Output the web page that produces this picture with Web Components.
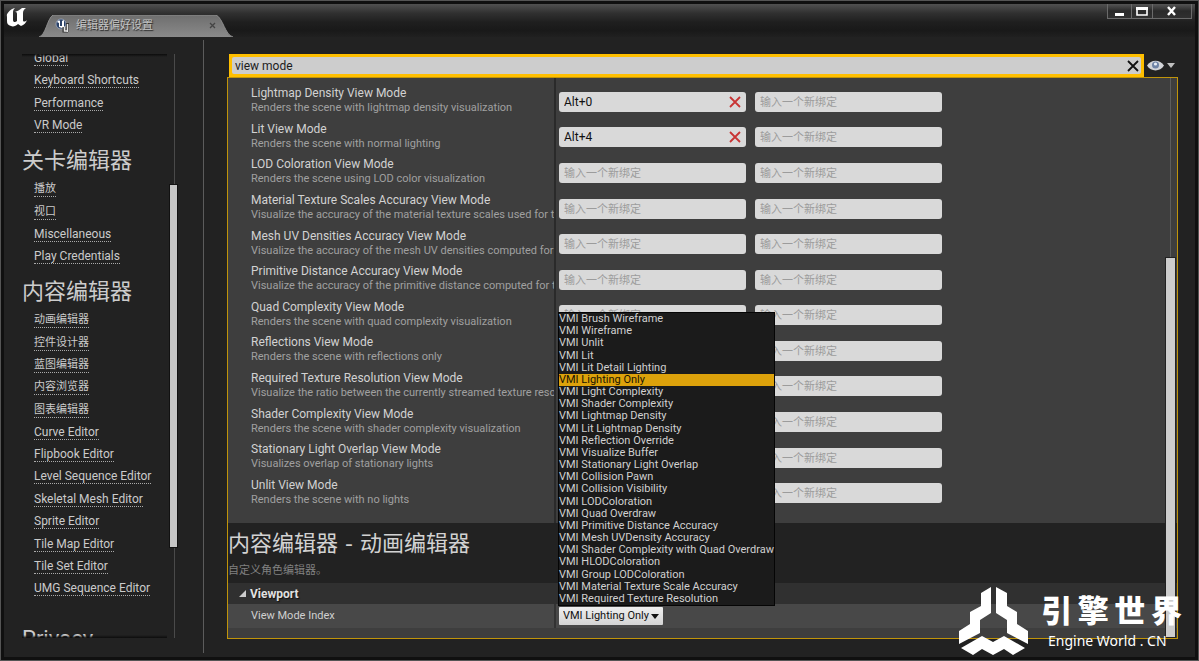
<!DOCTYPE html>
<html lang="zh-CN">
<head>
<meta charset="utf-8">
<title>编辑器偏好设置</title>
<style>
html, body { margin: 0; background: #222; }
body { font: 12px/16px Roboto, "Noto Sans CJK SC", sans-serif; color: #d0d0d0; }
</style>
</head>
<body>
<editor-window></editor-window>

<script>
const define = (name, html, setup) => {
  const t = document.createElement('template');
  t.innerHTML = html;
  customElements.define(name, class extends HTMLElement {
    constructor() {
      super();
      this.attachShadow({ mode: 'open' }).append(t.content.cloneNode(true));
    }
    connectedCallback() { if (setup) setup(this, this.shadowRoot); }
  });
};

define('title-bar', `
<style>
:host { display: flex; height: 33px; padding-left: 1px; box-sizing: border-box;
  background: linear-gradient(#505050, #303030 28%, #1f1f1f 55%, #191919 80%, #202020); }
.logo { width: 24px; height: 24px; margin: 1px 0 0; flex: none; }
.tab { position: relative; display: flex; align-items: center; width: 194px; height: 22px; margin: 11px 0 0 10px; }
.shape { position: absolute; inset: 0; width: 100%; height: 100%; }
.icon { position: relative; width: 16px; height: 16px; margin-left: 16px; }
.name { position: relative; flex: 1; margin-left: 5px; font-size: 11px; color: #c4c4c4; text-shadow: 1px 1px 1px #222; }
.tab button { position: relative; width: 8px; height: 8px; margin-right: 16px; padding: 0; border: 0; background: none; display: flex; }
.controls { display: flex; margin: 0 3px 0 auto; height: 15px; border: 1px solid #6a6a6a; border-top: 0; box-sizing: border-box; }
.controls button { display: grid; place-items: center; width: 24px; padding: 0; border: 0; border-right: 1px solid #6a6a6a; background: linear-gradient(#555, #2a2a2a 50%, #303030); }
.controls button:nth-child(2) { width: 21px; }
.controls button:last-child { width: 38px; border-right: 0; }
</style>
<svg class="logo" viewBox="0 0 24 24" fill="#fff" role="img" aria-label="Unreal"><path d="M1 12C2 8 5 4 10 3 8 5 8 6 8 8v7c0 2 2 3 4 1V9c0-2-1-2-2-2 2-1 5-2 7-4h4c-2 1-3 3-3 5v7c0 2 2 2 4 0-1 3-3 5-6 6l-3-2c-2 2-5 3-7 2-3-1-4-2-4-5V10C2 9 2 10 1 12z"/></svg>
<div class="tab">
  <svg class="shape" viewBox="0 0 194 22" preserveAspectRatio="none"><defs><linearGradient id="g" x2="0" y2="1"><stop stop-color="#6e6e6e"/><stop offset="1" stop-color="#8a8a8a"/></linearGradient></defs><path d="M0 22C7 20 8 4 14 0H177C184 3 186 20 194 22Z" fill="url(#g)"/><path d="M0 22C7 20 8 4 14 0H177C184 3 186 20 194 22" fill="none" stroke="#8c8c8c"/></svg>
  <svg class="icon" viewBox="0 0 16 16"><circle cx="6" cy="6" r="5" fill="#2b4268" stroke="#aab6cc" stroke-width=".7"/><path d="M2 4c2-2 2-2 3-1v5h2V3l2-1v6l1 1-3 1-3-1V5z" fill="#fff"/><path d="M9 9v4h4M12.500 5v9" fill="none" stroke="#333" stroke-width="3"/><path d="M9.500 9v4h3M12.500 6v8" fill="none" stroke="#e4e4e4" stroke-width="1.500"/></svg>
  <span class="name">编辑器偏好设置</span>
  <button aria-label="关闭标签"><svg viewBox="0 0 8 8" width="8" height="8"><path d="M1 1l5 5M6 1L1 6" stroke="#444" stroke-width="1.3"/></svg></button>
</div>
<div class="controls">
  <button aria-label="最小化"><svg width="12" height="11"><path d="M1 7h9v3H1z" fill="#fff"/></svg></button>
  <button aria-label="最大化"><svg width="12" height="10"><path d="M1 3h10v6H1z" fill="none" stroke="#fff" stroke-width="1.6"/><path d="M0 1h12v3H0z" fill="#fff"/></svg></button>
  <button aria-label="关闭"><svg width="12" height="10"><path d="M2 1l7 8M9 1L2 9" stroke="#fff" stroke-width="2.4"/></svg></button>
</div>`);

define('nav-group', `
<style>
:host { display: block; }
h2 { margin: 0; padding-top: 6px; font-size: 22px; line-height: 35px; font-weight: 400; color: #ccc; white-space: nowrap; }
h2:empty { display: none; }
ul { display: grid; grid-auto-rows: 1fr; align-items: center; margin: 0; padding: 0 0 0 12px; list-style: none; }
li { display: flex; }
a { color: #cbcbcb; text-decoration: none; line-height: 14px; border-bottom: 1px dotted #aaa; white-space: nowrap; }
a.cjk { font-size: 11px; padding-top: 1px; }
</style><h2></h2><ul></ul>`, (el, r) => {
  r.querySelector('h2').textContent = el.getAttribute('heading') || '';
  const ul = r.querySelector('ul');
  const items = (el.getAttribute('items') || '').split('|').filter(Boolean);
  ul.style.minHeight = Math.round(items.length * 22.4) + 'px';
  for (const i of items) {
    const li = document.createElement('li'), a = document.createElement('a');
    a.href = '#'; a.textContent = i;
    if (i.charCodeAt(0) > 255) a.className = 'cjk';
    li.append(a); ul.append(li);
  }
});

define('side-nav', `
<style>
:host { display: flex; width: 200px; flex: none; box-sizing: border-box; padding: 17px 0 19px; position: relative; }
.rule { position: absolute; right: 0; top: 3px; bottom: 4px; width: 1px; background: #5c5c5c; }
nav { position: relative; flex: 1; margin-left: 18px; overflow: hidden; height: 0; min-height: 100%; }
nav::before, nav::after { content: ""; position: absolute; left: 0; right: 0; height: 3px; z-index: 1; }
nav::before { top: 0; background: linear-gradient(#0c0c0c, transparent); }
nav::after { bottom: 0; background: linear-gradient(transparent, #0c0c0c); }
.list { margin-top: -7px; }
.last { margin-top: 15px; }
.bar { width: 7px; margin: 0 27px 0 3px; background: linear-gradient(90deg, transparent 4px, #4a4a4a 4px 5px, transparent 5px); display: grid; grid-template-rows: 131fr 362fr 91fr; }
.bar i { grid-row: 2; background: #c6c6c6; outline: 1px solid #111; }
</style>
<nav><div class="list">
<nav-group items="Global|Keyboard Shortcuts|Performance|VR Mode"></nav-group>
<nav-group heading="关卡编辑器" items="播放|视口|Miscellaneous|Play Credentials"></nav-group>
<nav-group heading="内容编辑器" items="动画编辑器|控件设计器|蓝图编辑器|内容浏览器|图表编辑器|Curve Editor|Flipbook Editor|Level Sequence Editor|Skeletal Mesh Editor|Sprite Editor|Tile Map Editor|Tile Set Editor|UMG Sequence Editor"></nav-group>
<nav-group class="last" heading="Privacy"></nav-group>
</div></nav>
<div class="bar"><i></i></div><div class="rule"></div>`);

define('search-bar', `
<style>
:host { display: flex; align-items: center; padding-left: 2px; }
label { flex: 1; display: flex; align-items: center; height: 23px; box-sizing: border-box; border: 3px solid #ffbf00; background: #ffbf00; }
.field { flex: 1; display: flex; align-items: center; height: 17px; background: #cdcdcd; border-radius: 2px; }
input { flex: 1; min-width: 0; border: 0; outline: 0; padding: 0 0 0 3px; background: none; font: inherit; color: #1c1c1c; }
button { border: 0; padding: 0; background: none; display: flex; }
.clear { margin-right: 2px; }
.view { width: 34px; padding-left: 3px; gap: 3px; align-items: center; box-sizing: border-box; }
</style>
<label><span class="field"><input type="text" value="view mode" aria-label="搜索"><button class="clear" aria-label="清除"><svg width="12" height="12"><path d="M1 1l10 10M11 1L1 11" stroke="#111" stroke-width="1.8"/></svg></button></span></label>
<button class="view" aria-label="视图选项"><svg width="17" height="11" viewBox="0 0 17 11"><path d="M0 5.500C4-1 13-1 17 5.500 13 12 4 12 0 5.500Z" fill="#d2d4d8"/><circle cx="8.500" cy="5" r="3.500" fill="#6f84a6"/><circle cx="8.500" cy="4" r="1.600" fill="#e8edf5"/></svg><svg width="8" height="5"><path d="M0 0h8L4 5z" fill="#c0c0c0"/></svg></button>`);

define('binding-row', `
<style>
:host { display: flex; align-items: center; padding-left: 23px; }
.text { width: 303px; flex: none; overflow: hidden; white-space: nowrap; padding-bottom: 3px; }
.name { color: #d2d2d2; line-height: 16px; }
.desc { font-size: 11px; line-height: 14px; color: #a0a0a0; }
.box { display: flex; align-items: center; width: 187px; height: 20px; margin-left: 9px; box-sizing: border-box; background: #d9d9d9; border-radius: 3px; padding: 0 5px; }
.text + .box { margin-left: 5px; }
input { flex: 1; min-width: 0; padding: 0; border: 0; background: none; outline: 0; font: inherit; color: #111; }
input::placeholder { font-size: 11px; color: #9c9c9c; opacity: 1; }
button { border: 0; padding: 0; background: none; display: flex; }
</style>
<div class="text"><div class="name"></div><div class="desc"></div></div>
<div class="box first"><input type="text" placeholder="输入一个新绑定" aria-label="绑定"></div>
<div class="box"><input type="text" placeholder="输入一个新绑定" aria-label="备用绑定"></div>`, (el, r) => {
  r.querySelector('.name').textContent = el.getAttribute('name') + ' View Mode';
  r.querySelector('.desc').textContent = el.getAttribute('desc');
  const key = el.getAttribute('key');
  if (key) {
    const box = r.querySelector('.first');
    box.firstElementChild.value = key;
    box.insertAdjacentHTML('beforeend', '<button aria-label="移除绑定"><svg width="12" height="12"><path d="M1 1l10 10M11 1L1 11" stroke="#c83434" stroke-width="1.8"/></svg></button>');
  }
});

define('mode-picker', `
<style>
:host { display: block; position: relative; width: 104px; }
.combo { display: grid; align-items: center; }
select, svg { grid-area: 1 / 1; }
select { appearance: none; width: 100%; height: 18px; padding: 0 0 0 4px; border: 0; border-radius: 1px; background: linear-gradient(#efefef, #d4d4d4); font: 11px/16px Roboto, sans-serif; color: #111; }
svg { justify-self: end; margin-right: 4px; pointer-events: none; }
ul { position: absolute; left: -1px; bottom: 19px; z-index: 2; display: grid; grid-auto-rows: 1fr; min-width: 208px; height: 292px; margin: 0; padding: 0; list-style: none; border: 1px solid #050505; background: #1b1b1b; font-size: 11px; line-height: 12px; color: #d0d0d0; white-space: nowrap; }
li[aria-selected=true] { background: #dda20b; color: #1b1500; }
</style>
<div class="combo"><select aria-label="View Mode Index"><option>VMI Lighting Only</option></select><svg width="8" height="5"><path d="M0 0h8L4 5z" fill="#111"/></svg></div>
<ul role="listbox" aria-label="View Mode Index"></ul>`, (el, r) => {
  const modes = 'Brush Wireframe|Wireframe|Unlit|Lit|Lit Detail Lighting|Lighting Only|Light Complexity|Shader Complexity|Lightmap Density|Lit Lightmap Density|Reflection Override|Visualize Buffer|Stationary Light Overlap|Collision Pawn|Collision Visibility|LODColoration|Quad Overdraw|Primitive Distance Accuracy|Mesh UVDensity Accuracy|Shader Complexity with Quad Overdraw|HLODColoration|Group LODColoration|Material Texture Scale Accuracy|Required Texture Resolution'.split('|');
  r.querySelector('ul').append(...modes.map(m => {
    const li = document.createElement('li');
    li.role = 'option'; li.textContent = 'VMI ' + m;
    li.setAttribute('aria-selected', String(m === 'Lighting Only'));
    return li;
  }));
});

define('settings-panel', `
<style>
:host { display: flex; flex-direction: column; position: relative; flex: 1; box-sizing: border-box; border: 1px solid #c0940a; background: #3e3e3e; }
.bindings { display: grid; grid-auto-rows: 1fr; min-height: 427px; padding: 6px 0 12px; background: linear-gradient(90deg, transparent 326px, #2a2a2a 326px 328px, transparent 328px); }
header { background: #222; height: 60px; box-sizing: border-box; padding-top: 4px; }
h1 { margin: 0; font: 22px/34px "DejaVu Sans", "Noto Sans CJK SC", sans-serif; color: #d2d2d2; }
p { margin: 0; font-size: 11px; line-height: 20px; color: #808080; }
h3 { margin: 0; display: flex; align-items: center; gap: 4px; height: 21px; padding-left: 11px; background: #303030; font-size: 12px; color: #e0e0e0; text-shadow: 1px 1px 1px #111; }
.row { display: flex; align-items: center; height: 24px; padding-left: 23px; background: linear-gradient(90deg, transparent 326px, #333 326px 328px, transparent 328px) #484848; font-size: 11px; }
.row span { width: 308px; }
.scroll { position: absolute; right: 2px; top: 0; bottom: 1px; width: 9px; display: grid; grid-template-rows: 180fr 378fr; background: linear-gradient(90deg, transparent 4px, #5d5d5d 4px 5px, transparent 5px); }
.scroll i { grid-row: 2; background: #cdcdcd; outline: 1px solid #222; }
</style>
<div class="bindings">
<binding-row name="Lightmap Density" desc="Renders the scene with lightmap density visualization" key="Alt+0"></binding-row>
<binding-row name="Lit" desc="Renders the scene with normal lighting" key="Alt+4"></binding-row>
<binding-row name="LOD Coloration" desc="Renders the scene using LOD color visualization"></binding-row>
<binding-row name="Material Texture Scales Accuracy" desc="Visualize the accuracy of the material texture scales used for texture streaming"></binding-row>
<binding-row name="Mesh UV Densities Accuracy" desc="Visualize the accuracy of the mesh UV densities computed for texture streaming"></binding-row>
<binding-row name="Primitive Distance Accuracy" desc="Visualize the accuracy of the primitive distance computed for texture streaming"></binding-row>
<binding-row name="Quad Complexity" desc="Renders the scene with quad complexity visualization"></binding-row>
<binding-row name="Reflections" desc="Renders the scene with reflections only"></binding-row>
<binding-row name="Required Texture Resolution" desc="Visualize the ratio between the currently streamed texture resolution and the wanted one"></binding-row>
<binding-row name="Shader Complexity" desc="Renders the scene with shader complexity visualization"></binding-row>
<binding-row name="Stationary Light Overlap" desc="Visualizes overlap of stationary lights"></binding-row>
<binding-row name="Unlit" desc="Renders the scene with no lights"></binding-row>
</div>
<header><h1>内容编辑器 - 动画编辑器</h1><p>自定义角色编辑器。</p></header>
<h3><svg width="7" height="7"><path d="M7 0v7H0z" fill="#ccc"/></svg>Viewport</h3>
<div class="row"><span>View Mode Index</span><mode-picker></mode-picker></div>
<div class="scroll"><i></i></div>`);

define('engine-mark', `
<style>
:host { position: absolute; right: 16px; bottom: 4px; z-index: 3; display: flex; gap: 13px; color: #fff; pointer-events: none; }
.name { display: flex; justify-content: space-between; width: 141px; margin-top: 4px; font: 900 31px/38px "Noto Sans CJK SC", sans-serif; }
.sub { font: 14px/26px "Noto Sans", sans-serif; padding-left: 7px; white-space: nowrap; }
</style>
<svg width="70" height="70" viewBox="0 0 70 70" fill="#fff"><path d="M33 1v26L22 34v13L1 58V45l11-7V26l11-6V7zM38 1v26l11 7v13l21 11V45l-11-7V26l-10-6V7zM24 50l11 6 11-6 21 12-12 7-9-6-11 6-11-6-9 6-12-7z"/></svg>
<div><div class="name"><span>引</span><span>擎</span><span>世</span><span>界</span></div><div class="sub">Engine World . CN</div></div>`);

define('editor-window', `
<style>
:host { display: flex; flex-direction: column; position: relative; box-sizing: border-box; min-height: 100vh; padding: 3px; border: 1px solid #555; background: #101010; overflow: hidden; }
.body { flex: 1; display: flex; background: #222; }
main { flex: 1; min-width: 0; display: flex; flex-direction: column; padding: 17px 17px 18px 23px; }
</style>
<title-bar></title-bar>
<div class="body"><side-nav></side-nav><main><search-bar></search-bar><settings-panel></settings-panel></main></div>
<engine-mark></engine-mark>`);
</script>
</body>
</html>
